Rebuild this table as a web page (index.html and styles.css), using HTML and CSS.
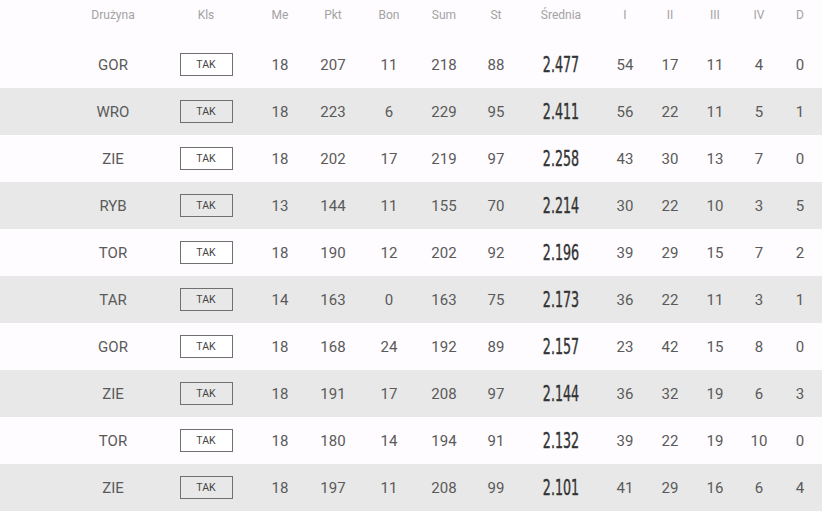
FILE: index.html
```html
<!DOCTYPE html>
<html lang="pl">
<head>
<meta charset="utf-8">
<link rel="stylesheet" href="styles.css">
</head>
<body>
<div class="table">
  <div class="row head">
    <span></span><span>Drużyna</span><span>Kls</span><span>Me</span><span>Pkt</span><span>Bon</span><span>Sum</span><span>St</span><span>Średnia</span><span>I</span><span>II</span><span>III</span><span>IV</span><span>D</span>
  </div>
  <div class="row"><span></span><span>GOR</span><span><b class="tag">TAK</b></span><span>18</span><span>207</span><span>11</span><span>218</span><span>88</span><span class="avg">2.477</span><span>54</span><span>17</span><span>11</span><span>4</span><span>0</span></div>
  <div class="row alt"><span></span><span>WRO</span><span><b class="tag">TAK</b></span><span>18</span><span>223</span><span>6</span><span>229</span><span>95</span><span class="avg">2.411</span><span>56</span><span>22</span><span>11</span><span>5</span><span>1</span></div>
  <div class="row"><span></span><span>ZIE</span><span><b class="tag">TAK</b></span><span>18</span><span>202</span><span>17</span><span>219</span><span>97</span><span class="avg">2.258</span><span>43</span><span>30</span><span>13</span><span>7</span><span>0</span></div>
  <div class="row alt"><span></span><span>RYB</span><span><b class="tag">TAK</b></span><span>13</span><span>144</span><span>11</span><span>155</span><span>70</span><span class="avg">2.214</span><span>30</span><span>22</span><span>10</span><span>3</span><span>5</span></div>
  <div class="row"><span></span><span>TOR</span><span><b class="tag">TAK</b></span><span>18</span><span>190</span><span>12</span><span>202</span><span>92</span><span class="avg">2.196</span><span>39</span><span>29</span><span>15</span><span>7</span><span>2</span></div>
  <div class="row alt"><span></span><span>TAR</span><span><b class="tag">TAK</b></span><span>14</span><span>163</span><span>0</span><span>163</span><span>75</span><span class="avg">2.173</span><span>36</span><span>22</span><span>11</span><span>3</span><span>1</span></div>
  <div class="row"><span></span><span>GOR</span><span><b class="tag">TAK</b></span><span>18</span><span>168</span><span>24</span><span>192</span><span>89</span><span class="avg">2.157</span><span>23</span><span>42</span><span>15</span><span>8</span><span>0</span></div>
  <div class="row alt"><span></span><span>ZIE</span><span><b class="tag">TAK</b></span><span>18</span><span>191</span><span>17</span><span>208</span><span>97</span><span class="avg">2.144</span><span>36</span><span>32</span><span>19</span><span>6</span><span>3</span></div>
  <div class="row"><span></span><span>TOR</span><span><b class="tag">TAK</b></span><span>18</span><span>180</span><span>14</span><span>194</span><span>91</span><span class="avg">2.132</span><span>39</span><span>22</span><span>19</span><span>10</span><span>0</span></div>
  <div class="row alt"><span></span><span>ZIE</span><span><b class="tag">TAK</b></span><span>18</span><span>197</span><span>11</span><span>208</span><span>99</span><span class="avg">2.101</span><span>41</span><span>29</span><span>16</span><span>6</span><span>4</span></div>
</div>
</body>
</html>
```
FILE: styles.css
```css
html, body {
  margin: 0;
  padding: 0;
  background: #fefcfe;
  overflow: hidden;
}
body {
  width: 822px;
  height: 512px;
  font-family: Roboto, "Liberation Sans", sans-serif;
  color: #5a5a5a;
}
.table {
  display: flex;
  flex-direction: column;
}
.row {
  display: grid;
  grid-template-columns: 66px 94px 92px 56px 50px 62px 48px 56px 74px 54px 36px 54px 34px 48px;
  height: 47px;
  align-items: center;
  text-align: center;
  font-size: 15px;
  width: 824px;
}
.row.head {
  height: 41px;
  align-items: start;
  font-size: 12px;
  color: #a3a3a3;
}
.row.head span {
  line-height: 31px;
}
.row.alt {
  background: #e8e8e8;
}
.tag {
  display: inline-block;
  box-sizing: border-box;
  width: 53px;
  height: 23px;
  line-height: 21px;
  border: 1px solid #707070;
  font-weight: normal;
  font-size: 10.5px;
  color: #444;
  background: #fff;
}
.row.alt .tag {
  background: #e8e8e8;
}
.avg {
  font-family: "Liberation Sans Narrow", "DejaVu Sans Condensed", sans-serif;
  font-size: 22px;
  font-weight: 500;
  color: #333;
  display: inline-block;
  transform: scaleX(0.64);
  -webkit-text-stroke: 0.4px #333;
}
```
